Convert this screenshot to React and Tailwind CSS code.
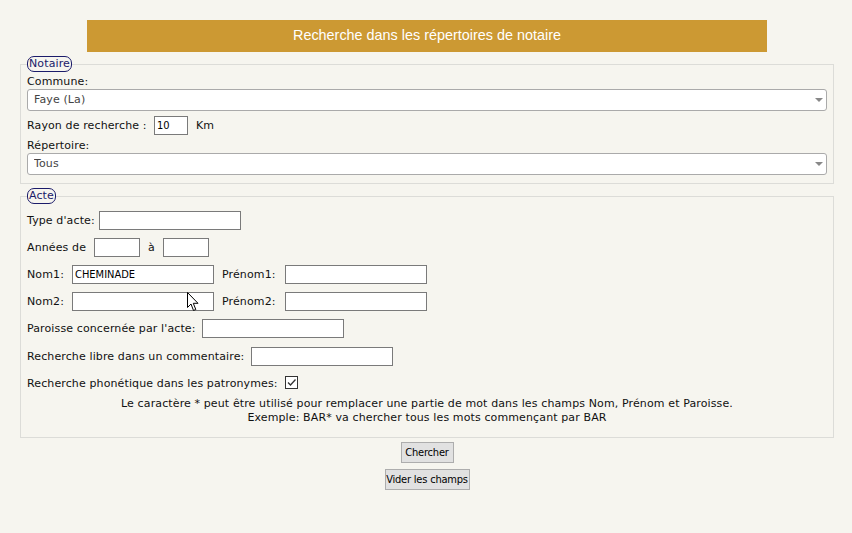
import React from 'react'

const LABEL = "font-['DejaVu_Sans',Verdana,sans-serif] text-[11px] leading-[14px] tracking-[0.12px] text-[#111]"
const NARROW = "font-['DejaVu_Sans_Condensed','DejaVu_Sans',sans-serif] font-stretch-condensed"
const INPUT = `h-[19px] border border-[#7a7a7a] bg-white px-[2px] ${NARROW} text-[11px] text-black outline-none`
const BUTTON = `h-[21px] whitespace-nowrap border border-[#adadad] bg-[#e1e1e1] px-0 text-center leading-[19px] ${NARROW} text-[11px] tracking-[-0.2px] text-black`

function Legend({ children }) {
  return (
    <legend className="rounded-[7px] border border-[#1b1b6a] px-[1px] font-['DejaVu_Sans',Verdana,sans-serif] text-[11px] leading-[14px] tracking-[0.12px] text-[#1b1b6a]">
      {children}
    </legend>
  )
}

function Select({ value }) {
  return (
    <div className="relative h-[22px]">
      <select
        defaultValue={value}
        className="block h-full w-full appearance-none rounded-[3px] border border-[#aaa] bg-white pl-[6px] font-['DejaVu_Sans',Verdana,sans-serif] text-[11px] tracking-[0.12px] text-[#444] outline-none"
      >
        <option>{value}</option>
      </select>
      <span className="pointer-events-none absolute right-[4px] top-[9px] h-0 w-0 border-x-[4px] border-t-[4px] border-x-transparent border-t-[#888]" />
    </div>
  )
}

function Field({ label, w, inputW = 'w-[142px]', value }) {
  return (
    <>
      <span className={`${LABEL} shrink-0 ${w}`}>{label}</span>
      <input className={`${INPUT} ${inputW}`} defaultValue={value} />
    </>
  )
}

function Cursor() {
  return (
    <svg className="pointer-events-none absolute left-[187px] top-[292px]" width="13" height="20" viewBox="0 0 13 20">
      <path d="M0.5 0.5 L0.5 15.5 L4 12 L6.5 18.5 L8.8 17.5 L6.3 11.3 L11 11.3 Z" fill="white" stroke="black" strokeWidth="1" strokeLinejoin="miter" />
    </svg>
  )
}

export default function App() {
  return (
    <div className="relative min-h-[533px] w-full bg-[#f6f5ef] pl-[20px] pr-[18px] pt-[20px]">
      <div className="mx-auto flex h-[32px] w-[680px] items-center justify-center bg-[#cc9933] font-['Liberation_Sans',Arial,sans-serif] text-[14.4px] text-white">
        Recherche dans les répertoires de notaire
      </div>

      <fieldset className="mt-[4px] border border-[#dcdcd8] px-[6px] pb-[8px]">
        <Legend>Notaire</Legend>
        <div className={`${LABEL} mt-[3px]`}>Commune:</div>
        <Select value="Faye (La)" />
        <div className="mt-[5px] flex h-[19px] items-center">
          <span className={`${LABEL} w-[127px] shrink-0`}>Rayon de recherche :</span>
          <input className={`${INPUT} w-[34px]`} defaultValue="10" />
          <span className={`${LABEL} ml-[8px]`}>Km</span>
        </div>
        <div className={`${LABEL} mt-[4px]`}>Répertoire:</div>
        <Select value="Tous" />
      </fieldset>

      <fieldset className="mt-[4px] border border-[#dcdcd8] px-[6px] pb-[12px]">
        <Legend>Acte</Legend>
        <div className="mt-[7px] flex flex-col gap-[8px]">
          <div className="flex h-[19px] items-center">
            <Field label="Type d'acte:" w="w-[72px]" />
          </div>
          <div className="flex h-[19px] items-center">
            <Field label="Années de" w="w-[67px]" inputW="w-[46px]" />
            <span className={`${LABEL} w-[23px] shrink-0 pl-[8px]`}>à</span>
            <input className={`${INPUT} w-[46px]`} />
          </div>
          <div className="flex h-[19px] items-center">
            <Field label="Nom1:" w="w-[45px]" value="CHEMINADE" />
            <span className={`${LABEL} ml-[8px] w-[63px] shrink-0`}>Prénom1:</span>
            <input className={`${INPUT} w-[142px]`} />
          </div>
          <div className="flex h-[19px] items-center">
            <Field label="Nom2:" w="w-[45px]" />
            <span className={`${LABEL} ml-[8px] w-[63px] shrink-0`}>Prénom2:</span>
            <input className={`${INPUT} w-[142px]`} />
          </div>
          <div className="flex h-[19px] items-center">
            <Field label="Paroisse concernée par l'acte:" w="w-[175px]" />
          </div>
          <div className="mt-[1px] flex h-[19px] items-center">
            <Field label="Recherche libre dans un commentaire:" w="w-[224px]" />
          </div>
          <div className="flex h-[19px] items-center">
            <span className={`${LABEL} w-[258px] shrink-0`}>Recherche phonétique dans les patronymes:</span>
            <span className="-mt-[2px] flex h-[13px] w-[13px] items-center justify-center border border-[#333] bg-white">
              <svg width="11" height="11" viewBox="0 0 11 11">
                <path d="M2 5.5 L4.5 8 L9.5 2.5" fill="none" stroke="#333" strokeWidth="1.3" />
              </svg>
            </span>
          </div>
        </div>
        <div className={`${LABEL} mt-[4px] text-center`}>
          Le caractère * peut être utilisé pour remplacer une partie de mot dans les champs Nom, Prénom et Paroisse.
          <br />
          Exemple: BAR* va chercher tous les mots commençant par BAR
        </div>
      </fieldset>

      <div className="mt-[4px] flex flex-col items-center gap-[6px]">
        <button className={`${BUTTON} w-[53px]`}>Chercher</button>
        <button className={`${BUTTON} w-[85px]`}>Vider les champs</button>
      </div>

      <Cursor />
    </div>
  )
}
